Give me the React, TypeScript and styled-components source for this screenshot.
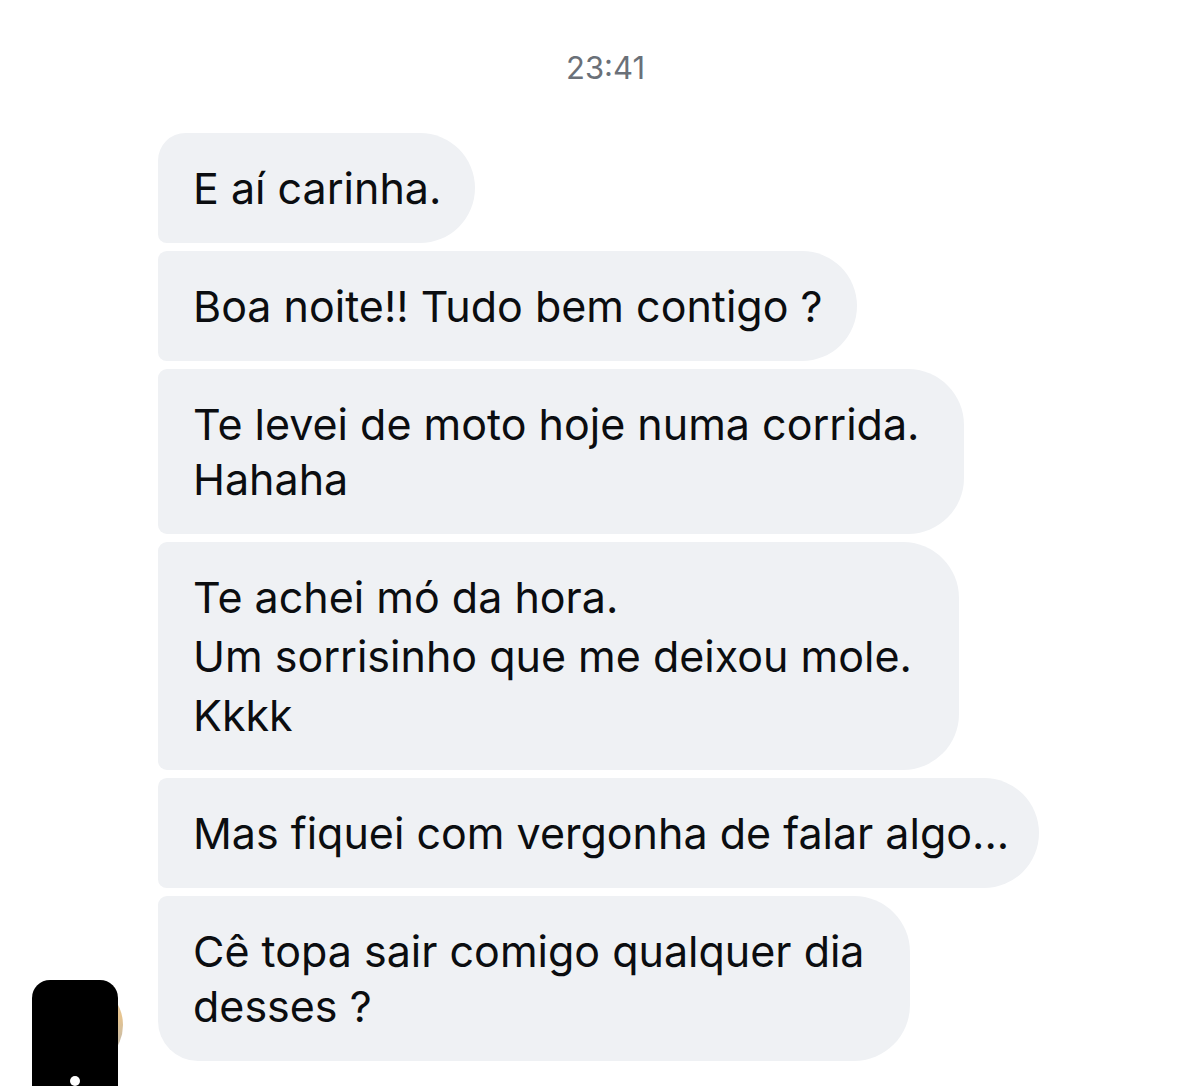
import React from "react";
import styled, { createGlobalStyle } from "styled-components";

const Global = createGlobalStyle`
  html, body { margin: 0; padding: 0; background: #ffffff; }
  body { overflow: hidden; width: 1199px; height: 1086px; }
`;

const Page = styled.div`
  width: 1199px;
  height: 1086px;
  overflow: hidden;
  background: #ffffff;
  font-family: Inter, "Liberation Sans", sans-serif;
  display: flex;
  flex-direction: column;
  padding-top: 50px;
  box-sizing: border-box;
`;

const Time = styled.div`
  text-align: center;
  font-size: 31px;
  line-height: 36px;
  color: #6a7078;
  padding-left: 12px;
  margin-bottom: 47px;
`;

const Thread = styled.div`
  display: flex;
  align-items: flex-end;
`;

const AvatarSlot = styled.div`
  position: relative;
  width: 88px;
  height: 88px;
  margin-left: 35px;
  margin-right: 35px;
  margin-bottom: -8px;
  flex-shrink: 0;
`;

const Avatar = styled.div`
  width: 88px;
  height: 88px;
  border-radius: 50%;
  background: linear-gradient(160deg, #c9d3de 0%, #e7c48e 55%, #a9b4c2 100%);
`;

const Redaction = styled.div`
  position: absolute;
  left: -3px;
  top: -1px;
  width: 86px;
  height: 140px;
  border-radius: 18px;
  background: #000000;
`;

const Dot = styled.span`
  position: absolute;
  left: 38px;
  top: 96px;
  width: 10px;
  height: 10px;
  border-radius: 50%;
  background: #ffffff;
`;

const Bubbles = styled.div`
  display: flex;
  flex-direction: column;
  align-items: flex-start;
  gap: 8px;
`;

const Bubble = styled.div<{ $first?: boolean; $last?: boolean; $pr?: number }>`
  background: #eff1f4;
  color: #0b0d10;
  font-size: 43px;
  line-height: 55px;
  padding: 28px ${(p) => p.$pr ?? 34}px 27px 35px;
  border-radius: ${(p) => (p.$first ? "28px" : "9px")} 56px 56px
    ${(p) => (p.$last ? "40px" : "9px")};
  white-space: nowrap;
`;

const Line = styled.div<{ $gap?: number }>`
  margin-top: ${(p) => p.$gap ?? 0}px;
`;

const messages: { lines: string[]; pr?: number; gap?: number }[] = [
  { lines: ["E aí carinha."] },
  { lines: ["Boa noite!! Tudo bem contigo ?"] },
  { lines: ["Te levei de moto hoje numa corrida.", "Hahaha"], pr: 45 },
  { lines: ["Te achei mó da hora.", "Um sorrisinho que me deixou mole.", "Kkkk"], pr: 47, gap: 4 },
  { lines: ["Mas fiquei com vergonha de falar algo..."], pr: 30 },
  { lines: ["Cê topa sair comigo qualquer dia", "desses ?"], pr: 45 },
];

export default function App() {
  return (
    <Page>
      <Global />
      <Time>23:41</Time>
      <Thread>
        <AvatarSlot>
          <Avatar />
          <Redaction>
            <Dot />
          </Redaction>
        </AvatarSlot>
        <Bubbles>
          {messages.map((m, i) => (
            <Bubble key={i} $first={i === 0} $last={i === messages.length - 1} $pr={m.pr}>
              {m.lines.map((l, j) => (
                <Line key={j} $gap={j > 0 ? m.gap : 0}>
                  {l}
                </Line>
              ))}
            </Bubble>
          ))}
        </Bubbles>
      </Thread>
    </Page>
  );
}
